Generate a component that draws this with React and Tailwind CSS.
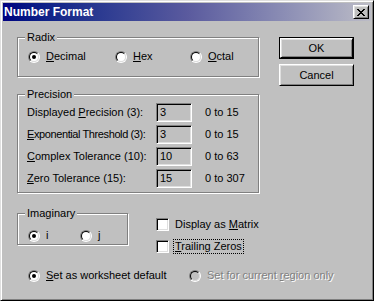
import clsx from 'clsx'

const raised = 'border border-t-white border-l-white border-r-black border-b-black shadow-[inset_1px_1px_#dfdfdf,inset_-1px_-1px_#808080]'
const sunken = 'border border-t-[#808080] border-l-[#808080] border-r-white border-b-white shadow-[inset_1px_1px_#000,inset_-1px_-1px_#dfdfdf]'

const CloseGlyph = () => {
  const rows = ['11000011', '01100110', '00111100', '00011000', '00111100', '01100110', '11000011']
  return (
    <svg width="8" height="7" viewBox="0 0 8 7" shapeRendering="crispEdges">
      {rows.map((r, y) =>
        r.split('').map((c, x) => (c === '1' ? <rect key={`${x}-${y}`} x={x} y={y} width="1" height="1" fill="#000" /> : null))
      )}
    </svg>
  )
}

const Radio = ({ checked, disabled }) => (
  <span className="w-[12px] h-[12px] rounded-full border border-t-[#808080] border-l-[#808080] border-r-white border-b-white flex shrink-0">
    <span
      className={clsx(
        'w-full h-full rounded-full border border-t-black border-l-black border-r-[#dfdfdf] border-b-[#dfdfdf] flex items-center justify-center',
        disabled ? 'bg-[#c0c0c0]' : 'bg-white'
      )}
    >
      {checked && <span className="w-[4px] h-[4px] rounded-full bg-black" />}
    </span>
  </span>
)

const Checkbox = () => <span className={clsx('w-[13px] h-[13px] bg-white shrink-0', sunken)} />

const Group = ({ title, className, children }) => (
  <div className={clsx('relative border border-[#808080] shadow-[inset_1px_1px_#fff,1px_1px_#fff]', className)}>
    <span className="absolute top-[-7px] left-[7px] px-[2px] bg-[#c0c0c0] leading-[13px]">{title}</span>
    {children}
  </div>
)

const Option = ({ checked, disabled, className, children }) => (
  <div className={clsx('flex items-center gap-[6px] whitespace-nowrap', className)}>
    <Radio checked={checked} disabled={disabled} />
    <span className={disabled ? 'text-[#808080] [text-shadow:1px_1px_#fff]' : ''}>{children}</span>
  </div>
)

const precision = [
  { pre: 'Displayed ', key: 'P', post: 'recision (3):', value: '3', range: '0 to 15' },
  { pre: '', key: 'E', post: 'xponential Threshold (3):', value: '3', range: '0 to 15', tight: true },
  { pre: '', key: 'C', post: 'omplex Tolerance (10):', value: '10', range: '0 to 63' },
  { pre: '', key: 'Z', post: 'ero Tolerance (15):', value: '15', range: '0 to 307' },
]

const Button = ({ isDefault, children }) => (
  <div className={clsx('w-[75px] h-[22px]', isDefault && 'border border-black')}>
    <div className={clsx('w-full h-full flex items-center justify-center', raised)}>{children}</div>
  </div>
)

export default function App() {
  return (
    <div className="w-[374px] h-[301px] bg-[#c0c0c0] border border-t-[#dfdfdf] border-l-[#dfdfdf] border-r-black border-b-black shadow-[inset_1px_1px_#fff,inset_-1px_-1px_#808080] p-[2px] flex flex-col text-black text-[11px] leading-[13px] font-['Liberation_Sans',Arial,sans-serif] whitespace-nowrap select-none">
      <div className="h-[18px] flex items-center justify-between pl-[1px] pr-[2px] bg-gradient-to-r from-[#000080] via-[#5a5a9e] to-[#bcbcc6]">
        <span className="text-white font-bold text-[12px]">Number Format</span>
        <button className={clsx('w-[16px] h-[14px] bg-[#c0c0c0] flex items-center justify-center', raised)}>
          <CloseGlyph />
        </button>
      </div>

      <div className="flex flex-col pl-[14px] pt-[16px]">
        <div className="flex">
          <div className="w-[242px] shrink-0 flex flex-col">
            <Group title="Radix" className="h-[40px] flex items-start pl-[10px] pt-[12px]">
              <Option checked className="w-[87px]">
                <u>D</u>ecimal
              </Option>
              <Option className="w-[75px]">
                <u>H</u>ex
              </Option>
              <Option>
                <u>O</u>ctal
              </Option>
            </Group>

            <Group title="Precision" className="h-[99px] mt-[17px] pl-[9px] pt-[8px] flex flex-col gap-[3px]">
              {precision.map(row => (
                <div key={row.key} className="flex items-center h-[19px]">
                  <span className={clsx('w-[129px]', row.tight && 'tracking-[-0.4px]')}>
                    {row.pre}
                    <u>{row.key}</u>
                    {row.post}
                  </span>
                  <span className={clsx('w-[36px] h-[19px] pl-[3px] pt-[2px] bg-[#c0c0c0]', sunken)}>{row.value}</span>
                  <span className="ml-[13px]">{row.range}</span>
                </div>
              ))}
            </Group>

            <div className="flex mt-[20px]">
              <Group title="Imaginary" className="w-[111px] h-[32px] shrink-0 flex items-start pl-[10px] pt-[15px]">
                <Option checked className="w-[52px]">
                  i
                </Option>
                <Option>j</Option>
              </Group>
              <div className="ml-[28px] pt-[5px] flex flex-col gap-[9px]">
                <div className="flex items-center gap-[5px]">
                  <Checkbox />
                  <span className="px-[1px]">
                    Display as <u>M</u>atrix
                  </span>
                </div>
                <div className="flex items-center gap-[5px]">
                  <Checkbox />
                  <span className="px-[1px] outline outline-1 outline-dotted outline-black">
                    <u>T</u>railing Zeros
                  </span>
                </div>
              </div>
            </div>
          </div>

          <div className="ml-[20px] flex flex-col gap-[5px]">
            <Button isDefault>OK</Button>
            <Button>Cancel</Button>
          </div>
        </div>

        <div className="flex h-[13px] mt-[16px] ml-[11px]">
          <Option checked className="w-[161px]">
            <u>S</u>et as worksheet default
          </Option>
          <Option disabled>
            Set for current <u>r</u>egion only
          </Option>
        </div>
      </div>
    </div>
  )
}
